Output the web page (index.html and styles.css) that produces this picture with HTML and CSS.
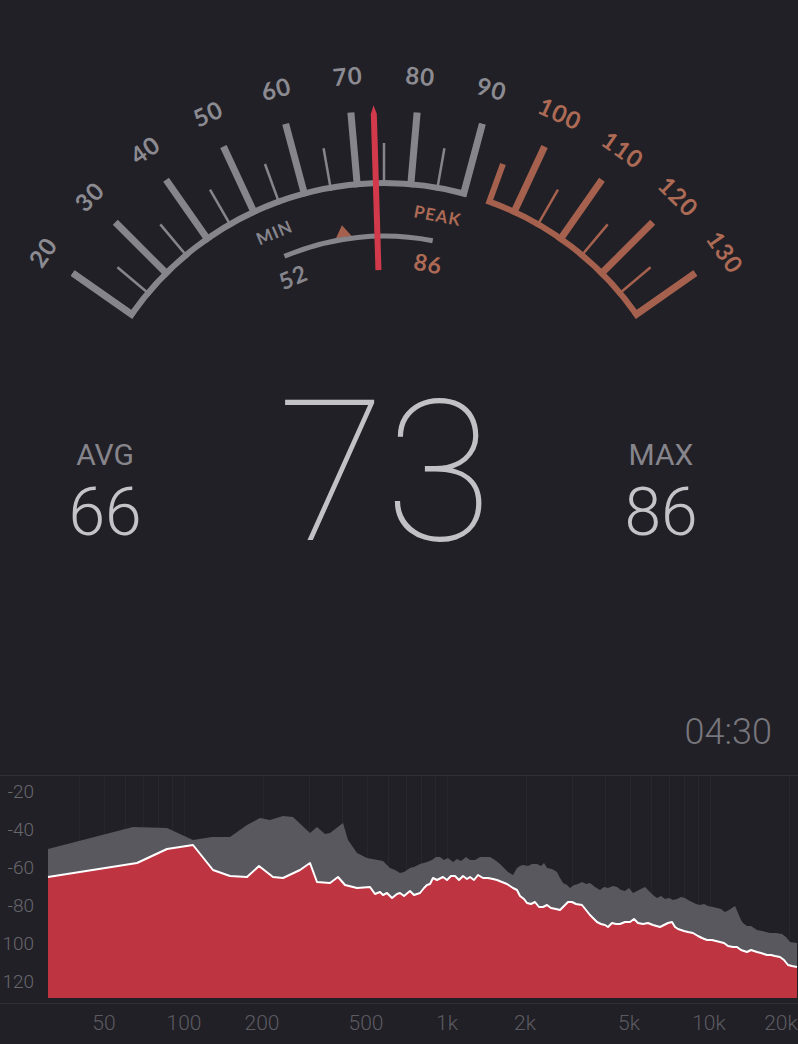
FILE: index.html
```html
<!DOCTYPE html>
<html lang="en">
<head>
    <meta charset="UTF-8">
    <meta name="viewport" content="width=device-width, initial-scale=1.0">
    <title>Sound Meter</title>
    <link rel="stylesheet" href="styles.css">
</head>
<body>
    <main class="meter">
        <!-- Gauge: pivot at 384,491, 1 degree per dB, 20 dB at -55deg -->
        <svg class="gauge" viewBox="0 0 798 340" width="798" height="340">
            <path class="arc arc-gray" d="M72.7 273 L131.7 314.3 A308 308 0 0 1 463.7 193.5 L482.4 123.9"/>
            <path class="arc arc-hot" d="M503 164 L489.3 201.6 A308 308 0 0 1 636.3 314.3 L695.3 273"/>

            <g transform="translate(384 491)">
                <g class="tick-major tick-gray">
                    <line y1="-305" y2="-380" transform="rotate(-55)"/>
                    <line y1="-305" y2="-380" transform="rotate(-45)"/>
                    <line y1="-305" y2="-380" transform="rotate(-35)"/>
                    <line y1="-305" y2="-380" transform="rotate(-25)"/>
                    <line y1="-305" y2="-380" transform="rotate(-15)"/>
                    <line y1="-305" y2="-380" transform="rotate(-5)"/>
                    <line y1="-305" y2="-380" transform="rotate(5)"/>
                    <line y1="-305" y2="-380" transform="rotate(15)"/>
                </g>
                <g class="tick-minor tick-gray">
                    <line y1="-305" y2="-348" transform="rotate(-50)"/>
                    <line y1="-305" y2="-348" transform="rotate(-40)"/>
                    <line y1="-305" y2="-348" transform="rotate(-30)"/>
                    <line y1="-305" y2="-348" transform="rotate(-20)"/>
                    <line y1="-305" y2="-348" transform="rotate(-10)"/>
                    <line y1="-305" y2="-348" transform="rotate(0)"/>
                    <line y1="-305" y2="-348" transform="rotate(10)"/>
                </g>
                <g class="tick-major tick-hot">
                    <line y1="-305" y2="-380" transform="rotate(25)"/>
                    <line y1="-305" y2="-380" transform="rotate(35)"/>
                    <line y1="-305" y2="-380" transform="rotate(45)"/>
                    <line y1="-305" y2="-380" transform="rotate(55)"/>
                </g>
                <g class="tick-minor tick-hot">
                    <line y1="-305" y2="-348" transform="rotate(30)"/>
                    <line y1="-305" y2="-348" transform="rotate(40)"/>
                    <line y1="-305" y2="-348" transform="rotate(50)"/>
                </g>

                <g class="scale-label">
                    <text transform="rotate(-55) translate(0 -417)">20</text>
                    <text transform="rotate(-45) translate(0 -417)">30</text>
                    <text transform="rotate(-35) translate(0 -417)">40</text>
                    <text transform="rotate(-25) translate(0 -417)">50</text>
                    <text transform="rotate(-15) translate(0 -417)">60</text>
                    <text transform="rotate(-5) translate(0 -417)">70</text>
                    <text transform="rotate(5) translate(0 -417)">80</text>
                    <text transform="rotate(15) translate(0 -417)">90</text>
                </g>
                <g class="scale-label hot">
                    <text transform="rotate(25) translate(0 -417)">100</text>
                    <text transform="rotate(35) translate(0 -417)">110</text>
                    <text transform="rotate(45) translate(0 -417)">120</text>
                    <text transform="rotate(55) translate(0 -417)">130</text>
                </g>

                <text class="range-tag" transform="rotate(-23) translate(0 -281)">MIN</text>
                <text class="range-tag hot" transform="rotate(11) translate(0 -281)">PEAK</text>
                <text class="range-value" transform="rotate(-23) translate(0 -233)">52</text>
                <text class="range-value hot" transform="rotate(11) translate(0 -232)">86</text>

                <polygon class="avg-mark" points="-8,-257 8,-257 0,-269" transform="rotate(-9)"/>
            </g>

            <path class="range-arc" d="M284.4 256.3 A255 255 0 0 1 432.7 240.7"/>

            <polygon class="needle" points="-3,-221 3,-221 3,-377 0,-386 -3,-377" transform="translate(385 491) rotate(-1.7)"/>
        </svg>

        <section class="readouts">
            <div class="stat">
                <div class="stat-label">AVG</div>
                <div class="stat-value">66</div>
            </div>
            <div class="current">73</div>
            <div class="stat">
                <div class="stat-label">MAX</div>
                <div class="stat-value">86</div>
            </div>
        </section>

        <div class="timer">04:30</div>

        <section class="spectrum">
            <svg viewBox="0 775 798 269" width="798" height="269">
                <line class="frame" x1="0" y1="775.5" x2="798" y2="775.5"/>
                <line class="frame" x1="0" y1="1003.5" x2="798" y2="1003.5"/>

                <g class="grid">
                    <line x1="79.5" y1="776" x2="79.5" y2="998"/>
                    <line x1="104.5" y1="776" x2="104.5" y2="998"/>
                    <line x1="125.5" y1="776" x2="125.5" y2="998"/>
                    <line x1="143.5" y1="776" x2="143.5" y2="998"/>
                    <line x1="158.5" y1="776" x2="158.5" y2="998"/>
                    <line x1="172.5" y1="776" x2="172.5" y2="998"/>
                    <line x1="184.5" y1="776" x2="184.5" y2="998"/>
                    <line x1="263.5" y1="776" x2="263.5" y2="998"/>
                    <line x1="309.5" y1="776" x2="309.5" y2="998"/>
                    <line x1="342.5" y1="776" x2="342.5" y2="998"/>
                    <line x1="367.5" y1="776" x2="367.5" y2="998"/>
                    <line x1="388.5" y1="776" x2="388.5" y2="998"/>
                    <line x1="406.5" y1="776" x2="406.5" y2="998"/>
                    <line x1="421.5" y1="776" x2="421.5" y2="998"/>
                    <line x1="435.5" y1="776" x2="435.5" y2="998"/>
                    <line x1="447.5" y1="776" x2="447.5" y2="998"/>
                    <line x1="526.5" y1="776" x2="526.5" y2="998"/>
                    <line x1="572.5" y1="776" x2="572.5" y2="998"/>
                    <line x1="605.5" y1="776" x2="605.5" y2="998"/>
                    <line x1="630.5" y1="776" x2="630.5" y2="998"/>
                    <line x1="651.5" y1="776" x2="651.5" y2="998"/>
                    <line x1="669.5" y1="776" x2="669.5" y2="998"/>
                    <line x1="684.5" y1="776" x2="684.5" y2="998"/>
                    <line x1="698.5" y1="776" x2="698.5" y2="998"/>
                    <line x1="710.5" y1="776" x2="710.5" y2="998"/>
                    <line x1="789.5" y1="776" x2="789.5" y2="998"/>
                </g>

                <!-- peak hold -->
                <polygon class="peak-area" points="48,849 133,827 167,828 193,840 212,837 230,837 247,825 260,818 270,820 283,816 293,817 310,833 317,827 325,834 330,833 343,823 348,840 357,853 367,858 383,861 390,868 395,870 400,873 404,872 410,868 414,867 420,864 427,862 432,860 436,857 440,857 444,860 448,858 453,862 457,859 461,861 466,857 470,860 475,860 480,857 485,857 490,857 495,860 500,864 503,867 508,872 513,875 517,868 520,866 523,865 528,866 532,864 537,864 541,866 544,863 547,868 552,869 557,872 560,878 563,883 567,885 570,888 574,885 578,884 582,882 586,884 590,883 595,887 600,890 604,887 608,888 613,886 617,887 621,890 625,891 629,888 633,893 637,891 641,889 645,887 649,891 653,895 657,898 661,896 665,899 669,898 673,900 677,899 681,897 685,898 688,900 692,902 696,904 700,905 704,904 708,906 713,907 717,908 721,909 725,912 729,910 735,906 738,913 741,920 743,923 747,926 751,926 757,930 762,931 766,932 770,933 776,933 782,934 786,937 790,942 797,943 797,998 48,998"/>

                <!-- live level -->
                <polygon class="live-area" points="48,877 137,863 167,849 193,845 213,870 230,876 247,877 259,866 273,877 283,878 300,870 310,863 317,882 330,883 338,877 345,885 357,888 370,887 375,894 380,892 383,895 387,893 392,898 397,894 400,893 404,896 410,891 414,895 420,893 424,888 427,885 430,884 433,878 437,880 443,877 447,880 451,876 455,876 459,880 463,876 467,879 470,877 474,880 478,875 483,878 488,878 493,879 497,880 502,882 507,884 513,888 517,890 520,896 524,899 527,903 531,904 535,902 539,907 543,907 547,905 551,908 556,909 560,910 564,906 568,902 572,902 576,904 582,905 586,910 590,915 594,919 597,922 601,924 605,925 608,927 612,923 616,924 620,924 625,922 630,922 634,919 638,923 643,924 648,923 653,925 660,927 664,925 668,923 672,922 675,927 678,929 684,931 688,932 693,933 698,936 702,938 707,940 712,940 716,941 720,942 724,943 728,946 733,947 737,947 741,950 747,952 751,950 754,951 757,952 761,953 764,954 767,955 771,955 775,956 780,957 784,960 788,965 792,966 797,967 797,998 48,998"/>
                <polyline class="live-line" points="48,877 137,863 167,849 193,845 213,870 230,876 247,877 259,866 273,877 283,878 300,870 310,863 317,882 330,883 338,877 345,885 357,888 370,887 375,894 380,892 383,895 387,893 392,898 397,894 400,893 404,896 410,891 414,895 420,893 424,888 427,885 430,884 433,878 437,880 443,877 447,880 451,876 455,876 459,880 463,876 467,879 470,877 474,880 478,875 483,878 488,878 493,879 497,880 502,882 507,884 513,888 517,890 520,896 524,899 527,903 531,904 535,902 539,907 543,907 547,905 551,908 556,909 560,910 564,906 568,902 572,902 576,904 582,905 586,910 590,915 594,919 597,922 601,924 605,925 608,927 612,923 616,924 620,924 625,922 630,922 634,919 638,923 643,924 648,923 653,925 660,927 664,925 668,923 672,922 675,927 678,929 684,931 688,932 693,933 698,936 702,938 707,940 712,940 716,941 720,942 724,943 728,946 733,947 737,947 741,950 747,952 751,950 754,951 757,952 761,953 764,954 767,955 771,955 775,956 780,957 784,960 788,965 792,966 797,967"/>

                <g class="axis-y">
                    <text x="34" y="798">-20</text>
                    <text x="34" y="836">-40</text>
                    <text x="34" y="874">-60</text>
                    <text x="34" y="912">-80</text>
                    <text x="34" y="950">100</text>
                    <text x="34" y="988">120</text>
                </g>
                <g class="axis-x">
                    <text x="104" y="1030">50</text>
                    <text x="184" y="1030">100</text>
                    <text x="262" y="1030">200</text>
                    <text x="366" y="1030">500</text>
                    <text x="447" y="1030">1k</text>
                    <text x="525" y="1030">2k</text>
                    <text x="629" y="1030">5k</text>
                    <text x="709" y="1030">10k</text>
                    <text x="781" y="1030">20k</text>
                </g>
            </svg>
        </section>
    </main>
</body>
</html>
```

FILE: styles.css
```css
* {
    margin: 0;
    padding: 0;
    box-sizing: border-box;
}

body {
    background-color: #212026;
    font-family: 'Roboto', 'Liberation Sans', sans-serif;
    overflow: hidden;
}

.meter {
    width: 798px;
    height: 1044px;
}

.gauge {
    display: block;
}

.arc {
    fill: none;
    stroke-width: 6;
    stroke-linejoin: miter;
}

.arc-gray {
    stroke: #86858c;
}

.arc-hot {
    stroke: #a5614d;
}

.tick-major line {
    stroke-width: 7;
}

.tick-minor line {
    stroke-width: 2.5;
}

.tick-gray line {
    stroke: #86858c;
}

.tick-hot line {
    stroke: #a5614d;
}

.scale-label text {
    font-family: 'Lato', 'Open Sans', sans-serif;
    font-weight: 700;
    font-size: 24px;
    letter-spacing: 1px;
    fill: #8c8b92;
    text-anchor: middle;
    dominant-baseline: central;
}

.scale-label.hot text {
    fill: #ad6a55;
}

.range-tag {
    font-family: 'Lato', 'Open Sans', sans-serif;
    font-weight: 700;
    font-size: 17px;
    letter-spacing: 1px;
    fill: #86858c;
    text-anchor: middle;
    dominant-baseline: central;
}

.range-value {
    font-family: 'Lato', 'Open Sans', sans-serif;
    font-weight: 700;
    font-size: 23px;
    letter-spacing: 1px;
    fill: #86858c;
    text-anchor: middle;
    dominant-baseline: central;
}

.range-tag.hot,
.range-value.hot {
    fill: #ad6a55;
}

.range-arc {
    fill: none;
    stroke: #86858c;
    stroke-width: 5;
}

.avg-mark {
    fill: #a5614d;
}

.needle {
    fill: #d23a4b;
}

.readouts {
    display: grid;
    grid-template-columns: 210px 1fr 274px;
    padding-top: 33px;
    height: 233px;
}

.stat {
    padding-top: 64px;
    text-align: center;
}

.stat-label {
    font-size: 30px;
    line-height: 35px;
    font-weight: 400;
    color: #86858c;
}

.stat-value {
    margin-top: 5px;
    font-size: 66px;
    line-height: 72px;
    font-weight: 300;
    color: #c4c3c8;
}

.current {
    padding-left: 36px;
    text-align: center;
    font-size: 196px;
    line-height: 200px;
    font-weight: 100;
    color: #c2c1c6;
}

.timer {
    margin-top: 138px;
    padding-right: 26px;
    text-align: right;
    font-size: 36px;
    line-height: 42px;
    font-weight: 300;
    color: #77767c;
}

.spectrum {
    margin-top: 22px;
    height: 269px;
}

.spectrum svg {
    display: block;
}

.frame {
    stroke: #302f36;
    stroke-width: 1;
}

.grid line {
    stroke: rgba(255, 255, 255, 0.035);
    stroke-width: 1;
}

.peak-area {
    fill: #59585f;
}

.live-area {
    fill: #bf3441;
}

.live-line {
    fill: none;
    stroke: #ffffff;
    stroke-width: 2;
    stroke-linejoin: round;
}

.axis-y text {
    font-size: 19px;
    font-weight: 300;
    fill: #68676d;
    text-anchor: end;
}

.axis-x text {
    font-size: 21px;
    font-weight: 300;
    fill: #5c5b61;
    text-anchor: middle;
}
```
